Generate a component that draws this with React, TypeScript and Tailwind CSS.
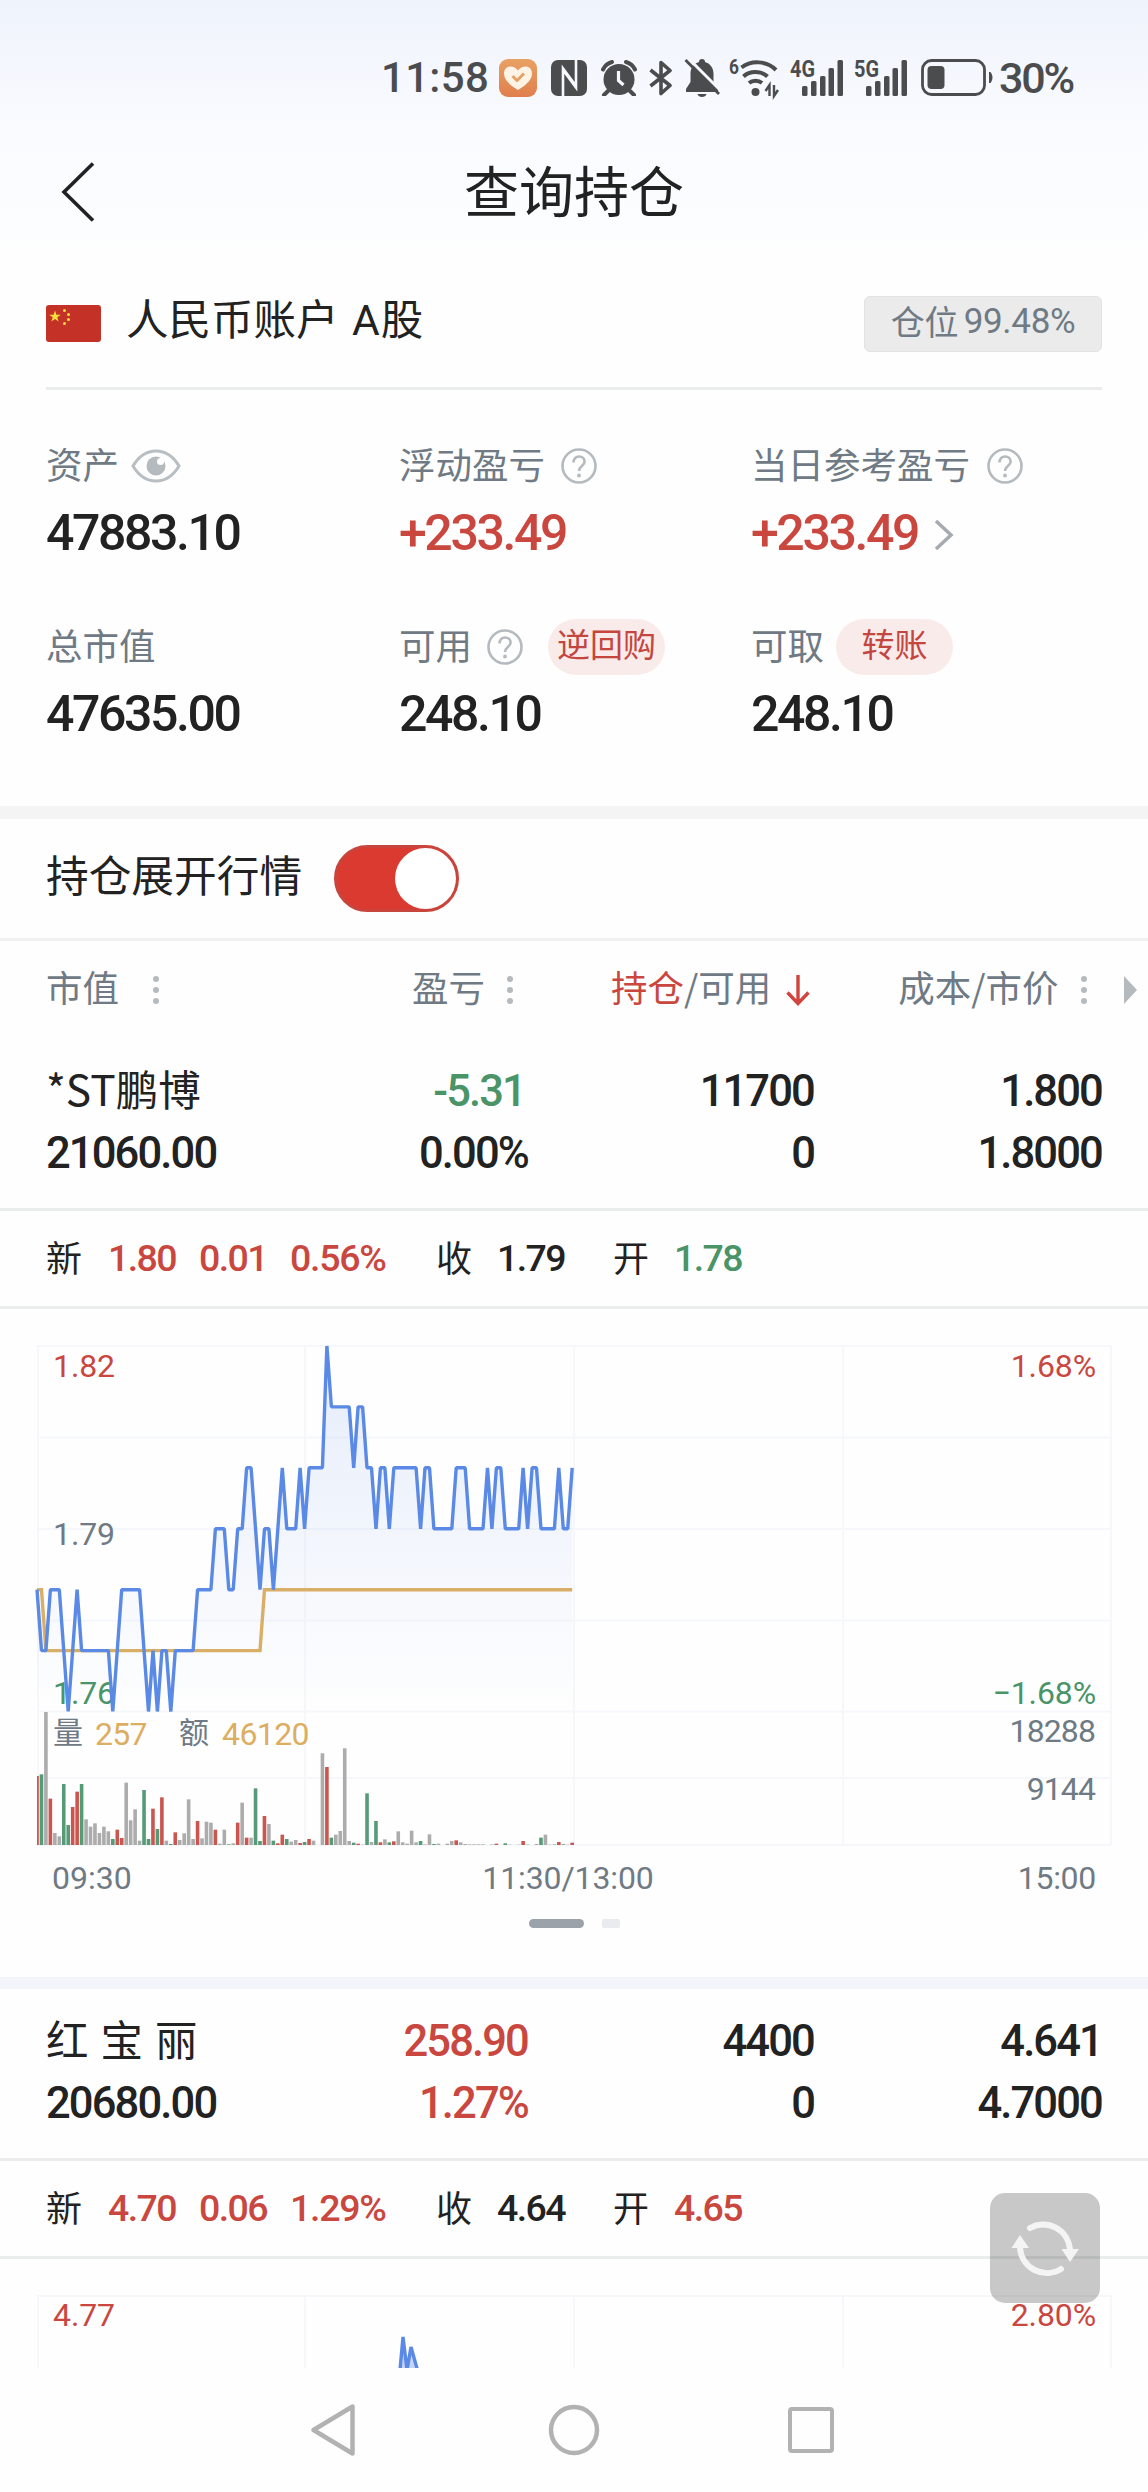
import React, { useState } from "react";

const GRAY = "#6f7a84";
const RED = "#c9473f";
const GREEN = "#4a9468";
const ORANGE = "#dcae62";
const BLUE = "#5b8ae6";

const num = "font-['Roboto','Noto_Sans_CJK_SC',sans-serif]";

const PRICES: number[][] = [
  [0, 1.78], [1, 1.77], [2, 1.77], [3, 1.78], [5, 1.78], [7, 1.76], [9, 1.78], [10, 1.77], [16, 1.77],
  [17, 1.76], [19, 1.78], [23, 1.78], [25, 1.76], [26, 1.77], [27, 1.76], [28, 1.77], [29, 1.77],
  [30, 1.76], [31, 1.77], [35, 1.77], [36, 1.78], [39, 1.78], [40, 1.79], [42, 1.79], [43, 1.78],
  [44, 1.78], [45, 1.79], [46, 1.79], [47, 1.8], [48, 1.8], [50, 1.78], [51, 1.79], [52, 1.79],
  [53, 1.78], [55, 1.8], [56, 1.79], [58, 1.79], [59, 1.8], [60, 1.79], [61, 1.8], [64, 1.8],
  [65, 1.82], [66, 1.81], [70, 1.81], [71, 1.8], [72, 1.81], [73, 1.81], [74, 1.8], [75, 1.8],
  [76, 1.79], [77, 1.8], [78, 1.8], [79, 1.79], [80, 1.8], [85, 1.8], [86, 1.79], [87, 1.8],
  [88, 1.8], [89, 1.79], [93, 1.79], [94, 1.8], [96, 1.8], [97, 1.79], [100, 1.79], [101, 1.8],
  [102, 1.79], [103, 1.8], [104, 1.8], [105, 1.79], [108, 1.79], [109, 1.8], [110, 1.79],
  [111, 1.8], [112, 1.8], [113, 1.79], [116, 1.79], [117, 1.8], [118, 1.79], [119, 1.79], [120, 1.8],
];

const AVERAGE: number[][] = [[0, 1.78], [1, 1.78], [2, 1.77], [50, 1.77], [51, 1.78], [120, 1.78]];

// one bar per minute, r / g / k = up / down / flat
const VOLUMES =
  "r207 g212 k399 r139 k36 k26 g183 g60 r114 r160 g183 k77 k55 k65 k36 k55 k41 g18 r46 r21 k187 k74 k107 k13 g165 g18 r109 g48 r143 k13 g3 r38 k15 k35 k137 k18 r72 k20 k70 k67 r46 k4 k46 g2 k5 r67 k127 r22 k22 g170 g12 r87 k63 g13 r5 r31 g18 k10 k15 r6 g9 r18 k13 k0 k275 r234 g22 k31 k42 k290 k12 g7 r4 k1 g155 k9 g72 r8 k17 g8 r11 k41 k8 k4 k43 k8 g12 r1 k32 g3 k4 k0 k4 k12 r14 k8 k3 k2 k2 k2 k2 k0 g1 r4 k0 g5 k1 k0 k1 r12 g1 k0 k3 g22 k31 k1 k2 r9 g2 k1 r7".split(" ");

const BAR_COLORS: Record<string, string> = { r: "#cb5650", g: "#559b77", k: "#acacac" };

const STEP = 4.46;
const toPoints = (data: number[][]) =>
  data.map(([m, p]) => `${(m * STEP).toFixed(1)},${((1.82 - p) * 6092).toFixed(1)}`).join(" ");

function HelpIcon({ className = "" }: { className?: string }) {
  return (
    <svg className={className} width="36" height="36" viewBox="0 0 36 36" fill="none" stroke="#b5babf" strokeWidth="2.6">
      <circle cx="18" cy="18" r="16.5" />
      <path d="M12.5 14.5c0-3.6 2.3-6 5.6-6 3.2 0 5.5 2.1 5.5 5 0 4.400-5.600 4.600-5.600 9.400" />
      <circle cx="18" cy="27.500" r="1.900" fill="#b5babf" stroke="none" />
    </svg>
  );
}

function EyeIcon() {
  return (
    <svg className="ml-[12px]" width="50" height="34" viewBox="0 0 50 34" fill="none">
      <path d="M2 17C8 7 16 2 25 2s17 5 23 15c-6 10-14 15-23 15S8 27 2 17z" stroke="#b9bec3" strokeWidth="3" />
      <circle cx="25" cy="17" r="9.500" fill="#b5babf" />
      <circle cx="29.500" cy="12.500" r="3.500" fill="#fff" />
    </svg>
  );
}

function Signal({ label }: { label: string }) {
  return (
    <svg className="ml-[11px] overflow-visible" width="53" height="38" viewBox="0 0 53 38" fill="#4b4c4e">
      <text x="0" y="18" fontSize="24" fontWeight="700" fontFamily="Roboto" textLength="25" lengthAdjust="spacingAndGlyphs">
        {label}
      </text>
      <rect x="12" y="27" width="5.500" height="10" rx="1.500" />
      <rect x="21" y="22" width="5.500" height="15" rx="1.500" />
      <rect x="30" y="17" width="5.500" height="20" rx="1.500" />
      <rect x="38.500" y="9" width="5.500" height="28" rx="1.500" />
      <rect x="47.500" y="1" width="5.500" height="36" rx="1.500" />
    </svg>
  );
}

function StatusBar() {
  return (
    <div className={`flex h-[156px] shrink-0 items-center pl-[381px] text-[#4b4c4e] ${num}`}>
      <span className="w-[107px] text-[42px] leading-none font-medium tracking-[0.300px] whitespace-nowrap">11:58</span>
      <svg className="ml-[11px]" width="38" height="38" viewBox="0 0 38 38">
        <defs>
          <linearGradient id="heartBg" x1="0" y1="0" x2="0" y2="1">
            <stop offset="0" stopColor="#e8a163" />
            <stop offset="1" stopColor="#e07f4e" />
          </linearGradient>
        </defs>
        <rect width="38" height="38" rx="9" fill="url(#heartBg)" />
        <path d="M19 31C9 25 5 20 5 14.500 5 10 8 7.500 11.500 7.500c3 0 5.500 1.500 7.500 4 2-2.500 4.500-4 7.500-4C30 7.500 33 10 33 14.500 33 20 29 25 19 31z" fill="#fdf3e6" />
        <path d="M13.500 17l4.500 4.500 7-7" stroke="#e7a263" strokeWidth="3" fill="none" />
      </svg>
      <svg className="ml-[14px]" width="36" height="36" viewBox="0 0 36 36">
        <rect width="36" height="36" rx="7" fill="#4b4c4e" />
        <path d="M12 36V8.500L25 26V11M25 0v27.500L12 10v16" fill="none" stroke="#f6f8fe" strokeWidth="2.600" />
      </svg>
      <svg className="ml-[14px]" width="36" height="36" viewBox="0 0 36 36">
        <circle cx="18" cy="19.500" r="15.500" fill="#4b4c4e" />
        <path d="M2 9.500C4 5.500 7 3 11 2M34 9.500C32 5.500 29 3 25 2M7 31l-4 4M29 31l4 4" stroke="#4b4c4e" strokeWidth="4" strokeLinecap="round" />
        <path d="M17.500 11v9.500l5 4.500" fill="none" stroke="#f6f8fe" strokeWidth="3.200" />
      </svg>
      <svg className="ml-[12px]" width="24" height="36" viewBox="0 0 24 36" fill="none" stroke="#4b4c4e" strokeWidth="3.600" strokeLinejoin="round">
        <path d="M1.500 10L21 25.500 12 33.500V2.500L21 10.500 1.500 26" />
      </svg>
      <svg className="ml-[11px]" width="36" height="38" viewBox="0 0 36 38">
        <path d="M18 0c-2 0-3 1.200-3 3-5 1.300-8.500 6-8.500 11.500V23L2 30v3h32v-3l-4.500-7v-8.500C29.500 9 26 4.300 21 3c0-1.800-1-3-3-3zM13.500 35h9c-.5 2-2.200 3-4.500 3s-4-1-4.500-3z" fill="#4b4c4e" />
        <path d="M4 -1L38 33" stroke="#f6f8fe" strokeWidth="3" />
        <path d="M1.500 1L35 35" stroke="#4b4c4e" strokeWidth="2.800" />
      </svg>
      <svg className="ml-[9px] overflow-visible" width="50" height="38" viewBox="0 0 50 38" fill="none" stroke="#4b4c4e" strokeWidth="4">
        <text x="0" y="15" fontSize="21" fontWeight="700" fontFamily="Roboto" fill="#4b4c4e" stroke="none" textLength="10" lengthAdjust="spacingAndGlyphs">
          6
        </text>
        <path d="M12.500 8.500C22 1 38 1.500 47 11M14.500 17.500c6-6 18-6 24 0M20 24c3.500-3 9.500-3 13 0" />
        <circle cx="26.500" cy="33" r="4" fill="#4b4c4e" stroke="none" />
        <path d="M40.500 37V26l-4 6M45 26v11l4-6" strokeWidth="2.400" />
      </svg>
      <Signal label="4G" />
      <Signal label="5G" />
      <svg className="ml-[14px]" width="72" height="38" viewBox="0 0 72 38">
        <rect x="1.500" y="1.500" width="62" height="34" rx="9" fill="none" stroke="#4b4c4e" strokeWidth="2.800" />
        <rect x="6.500" y="7" width="17" height="23" rx="4" fill="#4b4c4e" />
        <path d="M68 13h1.500c1.500 2 2 4 2 5.500s-.5 3.500-2 5.500H68z" fill="#4b4c4e" />
      </svg>
      <span className="ml-[6px] text-[43px] leading-none font-medium tracking-[-2.200px]">30%</span>
    </div>
  );
}

function Asset({ label, value, red, children, arrow }: any) {
  return (
    <div>
      <div className="flex h-[60px] items-center text-[36.500px] leading-none text-[#6f7a84]">
        <span className="-mt-[4px]">{label}</span>
        {children}
      </div>
      <div className={`flex h-[72px] items-center pt-[2px] text-[50px] leading-none font-medium tracking-[-2.400px] ${num} ${red ? "text-[#c9473f]" : "text-[#222]"}`}>
        {value}
        {arrow && (
          <svg className="mt-[4px] ml-[16px]" width="20" height="30" viewBox="0 0 20 30" fill="none" stroke="#a5abb1" strokeWidth="3.500">
            <path d="M2 1l15 14L2 29" />
          </svg>
        )}
      </div>
    </div>
  );
}

function Pill({ text, className }: { text: string; className: string }) {
  return (
    <button className={`flex h-[56px] w-[117px] items-center justify-center rounded-full bg-[#faebeb] pb-[7px] text-[33px] leading-none text-[#c4463e] ${className}`}>
      {text}
    </button>
  );
}

function Dots({ className }: { className: string }) {
  return (
    <span className={`flex flex-col gap-[5px] ${className}`}>
      <i className="size-[6px] rounded-full bg-[#b5babf]" />
      <i className="size-[6px] rounded-full bg-[#b5babf]" />
      <i className="size-[6px] rounded-full bg-[#b5babf]" />
    </span>
  );
}

type Stock = {
  name: string;
  marketValue: string;
  profit: string;
  rate: string;
  profitClass: string;
  rateClass: string;
  hold: string;
  cost: string;
  price: string;
  quote: string[];
  openClass: string;
};

const STOCKS: Stock[] = [
  {
    name: "*ST鹏博",
    marketValue: "21060.00",
    profit: "-5.31",
    rate: "0.00%",
    profitClass: "text-[#4a9468] pr-[3px]",
    rateClass: "text-[#222]",
    hold: "11700",
    cost: "1.800",
    price: "1.8000",
    quote: ["1.80", "0.01", "0.56%", "1.79", "1.78"],
    openClass: "text-[#4a9468]",
  },
  {
    name: "红 宝 丽",
    marketValue: "20680.00",
    profit: "258.90",
    rate: "1.27%",
    profitClass: "text-[#c9473f]",
    rateClass: "text-[#c9473f]",
    hold: "4400",
    cost: "4.641",
    price: "4.7000",
    quote: ["4.70", "0.06", "1.29%", "4.64", "4.65"],
    openClass: "text-[#c9473f]",
  },
];

function StockRows({ stock }: { stock: Stock }) {
  const cell = "flex h-[62px] items-center justify-end";
  const q = "-mt-[6px] font-['Noto_Sans_CJK_SC',sans-serif] text-[36px] font-normal tracking-normal text-[#222]";
  return (
    <>
      <div className={`grid shrink-0 grid-cols-[240px_242px_286px_288px] border-b-[3px] border-[#ebecec] pt-[22px] pb-[23px] pl-[46px] text-[43.500px] leading-none font-medium tracking-[-1.850px] text-[#222] ${num}`}>
        <span className="flex h-[62px] items-center pb-[7px] font-['Noto_Sans_CJK_SC',sans-serif] text-[42.500px] font-normal tracking-normal [word-spacing:2.500px] whitespace-pre">
          {stock.name}
        </span>
        <span className={`${cell} ${stock.profitClass}`}>{stock.profit}</span>
        <span className={cell}>{stock.hold}</span>
        <span className={cell}>{stock.cost}</span>
        <span className="flex h-[62px] items-center">{stock.marketValue}</span>
        <span className={`${cell} ${stock.rateClass}`}>{stock.rate}</span>
        <span className={cell}>0</span>
        <span className={cell}>{stock.price}</span>
      </div>
      <div className={`grid h-[98px] shrink-0 grid-cols-[62px_91px_91px_146px_61px_116px_61px_auto] items-center border-b-[3px] border-[#ebecec] pl-[46px] text-[37.500px] leading-none font-medium tracking-[-1.600px] text-[#c9473f] ${num}`}>
        <span className={q}>新</span>
        <span>{stock.quote[0]}</span>
        <span>{stock.quote[1]}</span>
        <span className="tracking-[-1.300px]">{stock.quote[2]}</span>
        <span className={q}>收</span>
        <span className="text-[#222]">{stock.quote[3]}</span>
        <span className={q}>开</span>
        <span className={stock.openClass}>{stock.quote[4]}</span>
      </div>
    </>
  );
}

function Grid() {
  return (
    <g stroke="#f6f7fa" strokeWidth="2">
      {[0, 91.5, 183, 274.5, 365.5, 432, 499].map((y) => (
        <path key={y} d={`M0 ${y}H1074`} />
      ))}
      {[1, 268, 537, 806, 1074].map((x) => (
        <path key={x} d={`M${x} 0V499`} />
      ))}
    </g>
  );
}

function MinuteChart() {
  const points = toPoints(PRICES);
  return (
    <svg className="block overflow-visible" width="1074" height="550" viewBox="0 0 1074 550" fontSize="32" fontFamily="Roboto, 'Noto Sans CJK SC', sans-serif" letterSpacing="-0.100">
      <defs>
        <linearGradient id="area" gradientUnits="userSpaceOnUse" x1="0" y1="0" x2="0" y2="366">
          <stop offset="0" stopColor="#5b8ae6" stopOpacity="0.15" />
          <stop offset="1" stopColor="#5b8ae6" stopOpacity="0" />
        </linearGradient>
      </defs>
      <Grid />
      <g fill={GRAY}>
        <text x="16" y="31" fill={RED}>1.82</text>
        <text x="16" y="199">1.79</text>
        <text x="16" y="358" fill={GREEN}>1.76</text>
        <g textAnchor="end">
          <text x="1059" y="31" fill={RED}>1.68%</text>
          <text x="1059" y="358" fill={GREEN}>−1.68%</text>
          <text x="1058" y="396" letterSpacing="-0.900">18288</text>
          <text x="1058" y="454" letterSpacing="-0.900">9144</text>
          <text x="1059" y="543" letterSpacing="-0.300">15:00</text>
        </g>
        <text x="16" y="397" fontSize="30">量</text>
        <text x="58" y="399" fill={ORANGE} letterSpacing="-0.700">257</text>
        <text x="142" y="397" fontSize="30">额</text>
        <text x="185" y="399" fill={ORANGE} letterSpacing="-0.600">46120</text>
        <text x="15" y="543" letterSpacing="0">09:30</text>
        <text x="531" y="543" textAnchor="middle">11:30/13:00</text>
      </g>
      <polygon points={`0,366 ${points} ${120 * STEP},366`} fill="url(#area)" />
      <polyline points={toPoints(AVERAGE)} fill="none" stroke="#d9ae66" strokeWidth="3.400" />
      <polyline points={points} fill="none" stroke={BLUE} strokeWidth="3.400" strokeLinejoin="bevel" />
      {VOLUMES.map((v, i) => {
        const h = Number(v.slice(1)) / 3;
        return <rect key={i} x={i === 0 ? 0 : i * STEP - 1.8} y={499 - h} width={i === 0 ? 1.8 : 3.6} height={h} fill={BAR_COLORS[v[0]]} />;
      })}
    </svg>
  );
}

export default function App() {
  const [expanded, setExpanded] = useState(true);
  return (
    <div className="relative flex h-[2492px] w-[1148px] flex-col overflow-hidden bg-[#fefefe] font-['Noto_Sans_CJK_SC',sans-serif] text-[#222]">
      <div className="flex h-[2368px] shrink-0 flex-col overflow-hidden bg-[linear-gradient(180deg,#eff3fb_0px,#f9fbff_130px,#fefefe_270px)]">
        <StatusBar />
        <header className="mb-[31px] grid h-[74px] shrink-0 grid-cols-[1fr_auto_1fr] items-center pl-[60px]">
          <svg className="-mt-[2px]" width="36" height="60" viewBox="0 0 36 60" fill="none" stroke="#222" strokeWidth="3.600">
            <path d="M33 1.500L4 30l29 28.500" />
          </svg>
          <h1 className="-ml-[60px] pb-[10px] text-[55px] leading-none">查询持仓</h1>
        </header>

        <div className="mx-[46px] flex h-[129px] shrink-0 items-center border-b-[3px] border-[#ebecec]">
          <svg className="-mt-[2px]" width="55" height="37" viewBox="0 0 55 37">
            <rect width="55" height="37" rx="3" fill="#c43127" />
            <g fill="#f7dc3f">
              <path d="M9 5.500l1.400 4.200h4.400l-3.500 2.600 1.300 4.200L9 13.900l-3.600 2.600 1.300-4.200-3.500-2.600h4.400z" />
              <circle cx="18.500" cy="5.500" r="1.500" />
              <circle cx="22.500" cy="9.500" r="1.500" />
              <circle cx="22.500" cy="14.500" r="1.500" />
              <circle cx="18.500" cy="18.500" r="1.500" />
            </g>
          </svg>
          <span className="ml-[25px] pb-[9px] text-[42.500px] leading-none [word-spacing:4px]">
            人民币账户 <span className="tracking-[1px] font-['Roboto']">A</span>股
          </span>
          <span className="ml-auto flex h-[56px] w-[238px] items-center justify-center rounded-[6px] border border-[#e2e2e2] bg-[#ebebeb] pb-[6px] text-[34px] leading-none text-[#6f7a84]">
            仓位<span className="ml-[5px] font-['Roboto'] text-[35px] tracking-[-0.300px]">99.48%</span>
          </span>
        </div>

        <section className="grid shrink-0 grid-cols-[353px_352px_auto] gap-y-[49px] pt-[46px] pb-[57px] pl-[46px]">
          <Asset label="资产" value="47883.10">
            <EyeIcon />
          </Asset>
          <Asset label="浮动盈亏" value="+233.49" red>
            <HelpIcon className="ml-[16px]" />
          </Asset>
          <Asset label="当日参考盈亏" value="+233.49" red arrow>
            <HelpIcon className="ml-[17px]" />
          </Asset>
          <Asset label="总市值" value="47635.00" />
          <Asset label="可用" value="248.10">
            <HelpIcon className="ml-[15px]" />
            <Pill text="逆回购" className="ml-[25px]" />
          </Asset>
          <Asset label="可取" value="248.10">
            <Pill text="转账" className="ml-[12px]" />
          </Asset>
        </section>

        <div className="h-[13px] shrink-0 bg-[#f4f4f4]" />

        <div className="flex h-[122px] shrink-0 items-center border-b-[3px] border-[#f1f1f1] pl-[46px]">
          <span className="pb-[11px] text-[42.700px] leading-none">持仓展开行情</span>
          <button
            onClick={() => setExpanded(!expanded)}
            className={`ml-[32px] flex h-[67px] w-[125px] items-center rounded-full border-[3px] ${expanded ? "justify-end border-[#c8443c] bg-[#da3a30]" : "border-gray-300 bg-gray-300"}`}
          >
            <span className="size-[61px] rounded-full bg-white" />
          </button>
        </div>

        <div className="flex h-[98px] shrink-0 items-center pt-[3px] pb-[4px] pl-[46px] text-[36.500px] leading-none text-[#6f7a84]">
          <span className="-mt-[5px] w-[107px]">市值</span>
          <Dots className="w-[259px]" />
          <span className="-mt-[5px] w-[95px]">盈亏</span>
          <Dots className="w-[104px]" />
          <span className="-mt-[5px]">
            <span className="text-[#c9473f]">持仓</span>/可用
          </span>
          <svg className="ml-[14px]" width="26" height="32" viewBox="0 0 26 32" fill="none" stroke="#d0453d" strokeWidth="3.400">
            <path d="M13 1v29M2.500 18.500L13 29.500l10.500-11" />
          </svg>
          <span className="-mt-[5px] ml-[87px]">成本/市价</span>
          <Dots className="ml-[22px]" />
          <svg className="ml-[37px]" width="13" height="28" viewBox="0 0 13 28">
            <path d="M0 0l13 14L0 28z" fill="#b5babf" />
          </svg>
        </div>

        <StockRows stock={STOCKS[0]} />
        <div className="h-[668px] shrink-0 pt-[37px] pl-[37px]">
          <MinuteChart />
          <div className="mt-[23px] flex gap-[18px] pl-[492px]">
            <i className="h-[9px] w-[55px] rounded-full bg-[#9ba2aa]" />
            <i className="h-[9px] w-[18px] rounded-[2px] bg-[#e9ebee]" />
          </div>
        </div>

        <div className="h-[12px] shrink-0 bg-[#f4f5fa]" />

        <StockRows stock={STOCKS[1]} />
        <div className="h-[109px] overflow-hidden pt-[37px] pl-[37px]">
          <svg className="block overflow-visible" width="1074" height="72" viewBox="0 0 1074 72" fontSize="32" fontFamily="Roboto, sans-serif" letterSpacing="-0.100">
            <Grid />
            <text x="16" y="30" fill={RED}>4.77</text>
            <text x="1059" y="30" fill={RED} textAnchor="end">2.80%</text>
            <polygon points="363,72 366,41 370,72 374,51 380,72" fill={BLUE} fillOpacity="0.35" />
            <polyline points="363,74 366,41 370,74 374,51 381,76" fill="none" stroke={BLUE} strokeWidth="3.400" />
          </svg>
        </div>
      </div>

      <nav className="flex h-[124px] shrink-0 items-center bg-[#fefefe] pl-[310px]">
        <svg width="46" height="54" viewBox="0 0 46 54" fill="none" stroke="#b2b2b2" strokeWidth="4.500" strokeLinejoin="round">
          <path d="M42.500 3.500v47L3.500 27z" />
        </svg>
        <svg className="ml-[192px]" width="52" height="52" viewBox="0 0 52 52" fill="none" stroke="#b2b2b2" strokeWidth="4.500">
          <circle cx="26" cy="26" r="23" />
        </svg>
        <i className="ml-[188px] size-[46px] rounded-[4px] border-[4.500px] border-[#b2b2b2]" />
      </nav>

      <button className="absolute top-[2193px] left-[990px] flex size-[110px] rounded-[15px] bg-black/21">
        <svg width="110" height="110" viewBox="0 0 110 110" fill="none" stroke="#f4f4f4" strokeWidth="6" strokeLinecap="round">
          <path d="M40 35A27 27 0 0 1 80 56M71 76A27 27 0 0 1 30 55" />
          <path d="M71.500 56h17.500l-9 13zM21.500 55h17.500l-9-13z" fill="#f4f4f4" stroke="none" />
        </svg>
      </button>
    </div>
  );
}
